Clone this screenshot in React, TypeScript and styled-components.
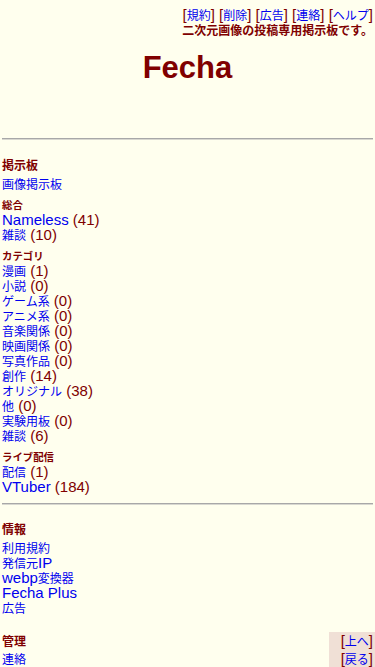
import { Fragment } from "react";
import styled, { createGlobalStyle } from "styled-components";

const GlobalStyle = createGlobalStyle`
  html, body {
    margin: 0;
    padding: 0;
    background: #ffffee;
  }
  body {
    font-family: "Liberation Sans", Arial, "Noto Sans CJK JP", sans-serif;
    font-size: 15px;
    line-height: 15px;
    color: #800000;
  }
`;

const Page = styled.div`
  padding: 7px 2px 0;
  min-height: 660px;
  box-sizing: border-box;
`;

const TopNav = styled.div`
  text-align: right;
`;

const NavLine = styled.div<{ $bold?: boolean }>`
  height: 15px;
  white-space: nowrap;
  font-weight: ${(p) => (p.$bold ? "bold" : "normal")};
`;

const Link = styled.a`
  color: #0000ee;
  text-decoration: none;
`;

// Japanese runs are set a little smaller so each glyph keeps the narrow
// cell width of the original page.
const Ja = styled.span`
  font-family: "Noto Sans CJK JP", sans-serif;
  font-size: 0.8em;
`;

const Title = styled.h1`
  margin: 13px 0 0;
  text-align: center;
  font-size: 31px;
  line-height: 36px;
  font-weight: bold;
  color: #800000;
`;

const Rule = styled.hr<{ $top: number; $bottom: number }>`
  margin: ${(p) => p.$top}px 0 ${(p) => p.$bottom}px;
  border: 0;
  border-top: 1px solid #a8a8a8;
  border-bottom: 1px solid #d8d8d0;
`;

const GroupTitle = styled.div`
  font-weight: bold;
  font-size: 15px;
  margin-bottom: 4px;
`;

const SubTitle = styled.div`
  font-weight: bold;
  font-size: 13px;
  margin-top: 6px;
`;

const List = styled.ul`
  list-style: none;
  margin: 0;
  padding: 0;
`;

const Item = styled.li`
  height: 15px;
  white-space: nowrap;
`;

const Count = styled.span`
  color: #800000;
`;

const Footer = styled.div`
  display: flex;
  margin-top: 17px;
  margin-right: -2px;
`;

const FooterMain = styled.div`
  flex: 1;
`;

const FooterSide = styled.div`
  width: 46px;
  background: #f0e0d6;
  text-align: right;
  padding-right: 2px;
  box-sizing: border-box;
`;

const FooterRow = styled.div<{ $bold?: boolean }>`
  height: 18px;
  line-height: 18px;
  white-space: nowrap;
  font-weight: ${(p) => (p.$bold ? "bold" : "normal")};
`;

const CJK = /([\u3000-\u30ff\u4e00-\u9fff\uff00-\uffef]+)/;

const T = ({ children }: { children: string }) => (
  <>
    {children.split(CJK).map((part, i) =>
      CJK.test(part) ? <Ja key={i}>{part}</Ja> : <Fragment key={i}>{part}</Fragment>
    )}
  </>
);

type Board = { name: string; count?: number };

const boards: Board[] = [
  { name: "Nameless", count: 41 },
  { name: "雑談", count: 10 },
];

const categories: Board[] = [
  { name: "漫画", count: 1 },
  { name: "小説", count: 0 },
  { name: "ゲーム系", count: 0 },
  { name: "アニメ系", count: 0 },
  { name: "音楽関係", count: 0 },
  { name: "映画関係", count: 0 },
  { name: "写真作品", count: 0 },
  { name: "創作", count: 14 },
  { name: "オリジナル", count: 38 },
  { name: "他", count: 0 },
  { name: "実験用板", count: 0 },
  { name: "雑談", count: 6 },
];

const streams: Board[] = [
  { name: "配信", count: 1 },
  { name: "VTuber", count: 184 },
];

const info = ["利用規約", "発信元IP", "webp変換器", "Fecha Plus", "広告"];

const navLinks = ["規約", "削除", "広告", "連絡", "ヘルプ"];

const BoardList = ({ items }: { items: Board[] }) => (
  <List>
    {items.map((b, i) => (
      <Item key={i}>
        <Link href="#">
          <T>{b.name}</T>
        </Link>
        {b.count !== undefined && <Count> ({b.count})</Count>}
      </Item>
    ))}
  </List>
);

const App = () => {
  return (
    <Page>
      <GlobalStyle />
      <TopNav>
        <NavLine>
          {navLinks.map((n, i) => (
            <span key={n}>
              {i > 0 && " "}[
              <Link href="#">
                <T>{n}</T>
              </Link>
              ]
            </span>
          ))}
        </NavLine>
        <NavLine $bold>
          <T>二次元画像の投稿専用掲示板です。</T>
        </NavLine>
      </TopNav>

      <Title>Fecha</Title>

      <Rule $top={52} $bottom={17} />

      <GroupTitle>
        <T>掲示板</T>
      </GroupTitle>
      <List>
        <Item>
          <Link href="#">
            <T>画像掲示板</T>
          </Link>
        </Item>
      </List>

      <SubTitle>
        <T>総合</T>
      </SubTitle>
      <BoardList items={boards} />

      <SubTitle>
        <T>カテゴリ</T>
      </SubTitle>
      <BoardList items={categories} />

      <SubTitle>
        <T>ライブ配信</T>
      </SubTitle>
      <BoardList items={streams} />

      <Rule $top={9} $bottom={16} />

      <GroupTitle>
        <T>情報</T>
      </GroupTitle>
      <List>
        {info.map((t) => (
          <Item key={t}>
            <Link href="#">
              <T>{t}</T>
            </Link>
          </Item>
        ))}
      </List>

      <Footer>
        <FooterMain>
          <FooterRow $bold>
            <T>管理</T>
          </FooterRow>
          <FooterRow>
            <Link href="#">
              <T>連絡</T>
            </Link>
          </FooterRow>
        </FooterMain>
        <FooterSide>
          <FooterRow>
            [
            <Link href="#">
              <T>上へ</T>
            </Link>
            ]
          </FooterRow>
          <FooterRow>
            [
            <Link href="#">
              <T>戻る</T>
            </Link>
            ]
          </FooterRow>
        </FooterSide>
      </Footer>
    </Page>
  );
};

export default App;
